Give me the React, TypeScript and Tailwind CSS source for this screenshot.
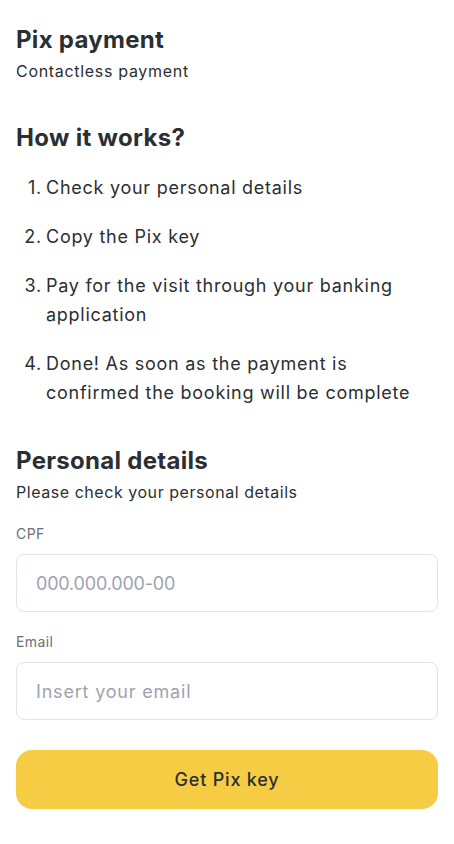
import React from "react";

export default function App() {
  const steps = [
    "Check your personal details",
    "Copy the Pix key",
    "Pay for the visit through your banking application",
    "Done! As soon as the payment is confirmed the booking will be complete",
  ];
  return (
    <div className="min-h-[844px] w-[454px] bg-white px-4 text-[#2b2f33]" style={{ fontFamily: "Inter, 'Noto Sans', sans-serif" }}>
      <div className="pt-[24px]">
        <h1 className="text-[24px] font-bold leading-[32px] tracking-[0.012em]">Pix payment</h1>
        <p className="mt-[3px] text-[16px] leading-[24px] tracking-[0.043em]">Contactless payment</p>
      </div>
      <h2 className="mt-[39px] text-[24px] font-bold leading-[32px] tracking-[0.013em]">How it works?</h2>
      <ol className="mt-[19px] flex flex-col gap-[20px]">
        {steps.map((s, i) => (
          <li key={i} className="flex text-[18px] leading-[29px] tracking-[0.041em]">
            <span className="w-[30px] shrink-0 pr-[4px] text-right">{i + 1}.</span>
            <span>{s}</span>
          </li>
        ))}
      </ol>
      <h2 className="mt-[38px] text-[24px] font-bold leading-[32px] tracking-[0.012em]">Personal details</h2>
      <p className="mt-[3px] text-[16px] leading-[24px] tracking-[0.034em]">Please check your personal details</p>
      <label className="mt-[20px] block text-[14px] leading-[20px] tracking-[0.03em] text-[#6b6f76]">CPF</label>
      <input
        className="mt-[10px] block h-[58px] w-full rounded-[8px] border border-[#e1e3ea] px-[19px] text-[18px] tracking-[-0.01em] outline-none placeholder:text-[#9ea3ae]"
        placeholder="000.000.000-00"
      />
      <label className="mt-[20px] block text-[14px] leading-[20px] tracking-[0.03em] text-[#6b6f76]">Email</label>
      <input
        className="mt-[10px] block h-[58px] w-full rounded-[8px] border border-[#e1e3ea] px-[19px] text-[18px] tracking-[0.045em] outline-none placeholder:text-[#9ea3ae]"
        placeholder="Insert your email"
      />
      <button className="mt-[30px] flex h-[59px] w-full items-center justify-center rounded-[16px] bg-[#f7cc45] text-[18px] font-medium tracking-[0.045em] text-[#2b2f33]">
        Get Pix key
      </button>
    </div>
  );
}
